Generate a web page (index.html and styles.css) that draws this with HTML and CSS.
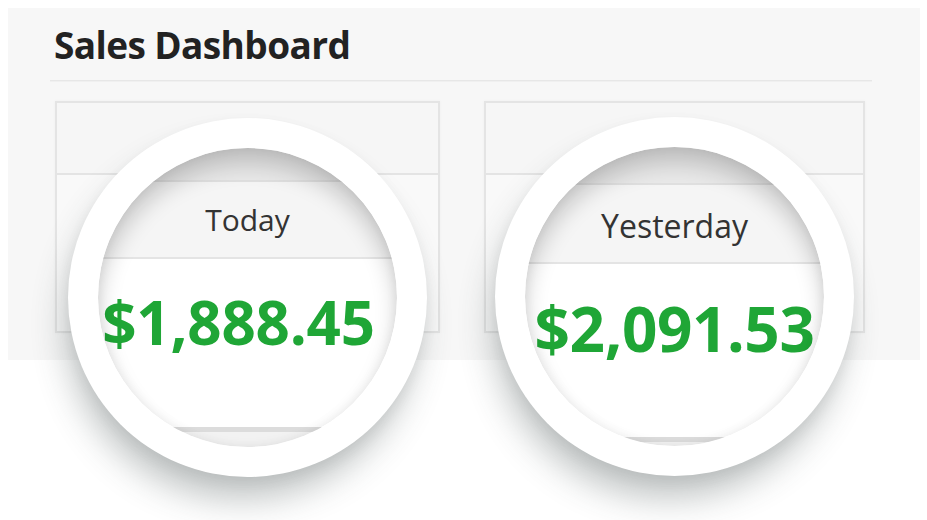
FILE: index.html
```html
<!DOCTYPE html>
<html lang="en">
<head>
<meta charset="utf-8">
<title>Sales Dashboard</title>
<link rel="stylesheet" href="styles.css">
</head>
<body>
  <div class="panel">
    <h1 class="title">Sales Dashboard</h1>
    <div class="rule"></div>
    <div class="cards">
      <div class="card">
        <div class="card-head"></div>
        <div class="card-body"></div>
      </div>
      <div class="card">
        <div class="card-head"></div>
        <div class="card-body"></div>
      </div>
    </div>
  </div>

  <div class="lens lens-today">
    <div class="glass">
      <div class="g-top"></div>
      <div class="g-head">Today</div>
      <div class="g-body"><span class="amount">$1,888.45</span></div>
      <div class="g-foot"></div>
    </div>
  </div>

  <div class="lens lens-yesterday">
    <div class="glass">
      <div class="g-top"></div>
      <div class="g-head">Yesterday</div>
      <div class="g-body"><span class="amount">$2,091.53</span></div>
      <div class="g-foot"></div>
    </div>
  </div>
</body>
</html>
```

FILE: styles.css
```css
* { box-sizing: border-box; }

html, body {
  margin: 0;
  padding: 0;
  background: #ffffff;
  font-family: "Open Sans", "Noto Sans", sans-serif;
}

body {
  position: relative;
  width: 927px;
  height: 520px;
  overflow: hidden;
}

.panel {
  margin: 8px 7px 0 8px;
  height: 352px;
  background: #f7f7f7;
  padding: 15px 48px 0 46px;
}

.title {
  margin: 0;
  font-size: 37px;
  line-height: 44px;
  font-weight: 700;
  letter-spacing: -0.6px;
  color: #222222;
}

.rule {
  margin: 13px 0 0 -4px;
  height: 2px;
  border-top: 1px solid #e7e7e7;
  border-bottom: 1px solid #f0f0f0;
}

.cards {
  margin: 19px 7px 0 1px;
  display: grid;
  grid-template-columns: 385px 381px;
  column-gap: 44px;
}

.card {
  height: 232px;
  border: 2px solid #e4e4e4;
  background: #f8f8f8;
  display: flex;
  flex-direction: column;
  box-shadow: 0 0 3px rgba(0, 0, 0, 0.04);
}

.card-head {
  height: 72px;
  border-bottom: 2px solid #e4e4e4;
  background: #f6f6f6;
}

.card-body {
  flex: 1;
  background: #f9f9f9;
}

/* Magnifier lenses overlaying the cards */
.lens {
  position: absolute;
  width: 359px;
  height: 359px;
  border-radius: 50%;
  background: #ffffff;
  padding: 30px;
  box-shadow:
    -6px 26px 34px -4px rgba(60, 70, 70, 0.32),
    0 6px 14px rgba(0, 0, 0, 0.06);
}

.lens-today { left: 68px; top: 118px; }
.lens-yesterday { left: 495px; top: 117px; }

.glass {
  position: relative;
  width: 100%;
  height: 100%;
  border-radius: 50%;
  overflow: hidden;
  display: flex;
  flex-direction: column;
  background: #ffffff;
}

.glass::after {
  content: "";
  position: absolute;
  inset: 0;
  border-radius: 50%;
  box-shadow:
    inset 0 16px 22px rgba(0, 0, 0, 0.18),
    inset 0 0 12px rgba(0, 0, 0, 0.07);
  pointer-events: none;
}

.g-top {
  height: 32px;
  background: #e9e9e9;
  flex: none;
}

.g-head {
  flex: none;
  height: 79px;
  border-top: 2px solid #e0e0e0;
  border-bottom: 2px solid #e4e4e4;
  background: #f5f5f5;
  display: flex;
  align-items: center;
  justify-content: center;
  font-size: 30px;
  color: #333333;
}

.g-body {
  flex: none;
  height: 168px;
  padding-top: 33px;
  background: #ffffff;
  text-align: center;
}

.amount {
  display: inline-block;
  font-size: 60px;
  line-height: 1;
  font-weight: 700;
  letter-spacing: -0.2px;
  color: #1fa636;
  margin-right: 18px;
}

.g-foot {
  flex: 1;
  border-top: 5px solid #dcdcdc;
  background: #f2f2f2;
}

.lens-yesterday .g-top { height: 36px; }
.lens-yesterday .g-head { height: 81px; font-size: 32px; padding-top: 4px; }
.lens-yesterday .g-body { height: 173px; }
.lens-yesterday .amount { font-size: 62px; letter-spacing: -0.4px; margin-right: 0; }
```
